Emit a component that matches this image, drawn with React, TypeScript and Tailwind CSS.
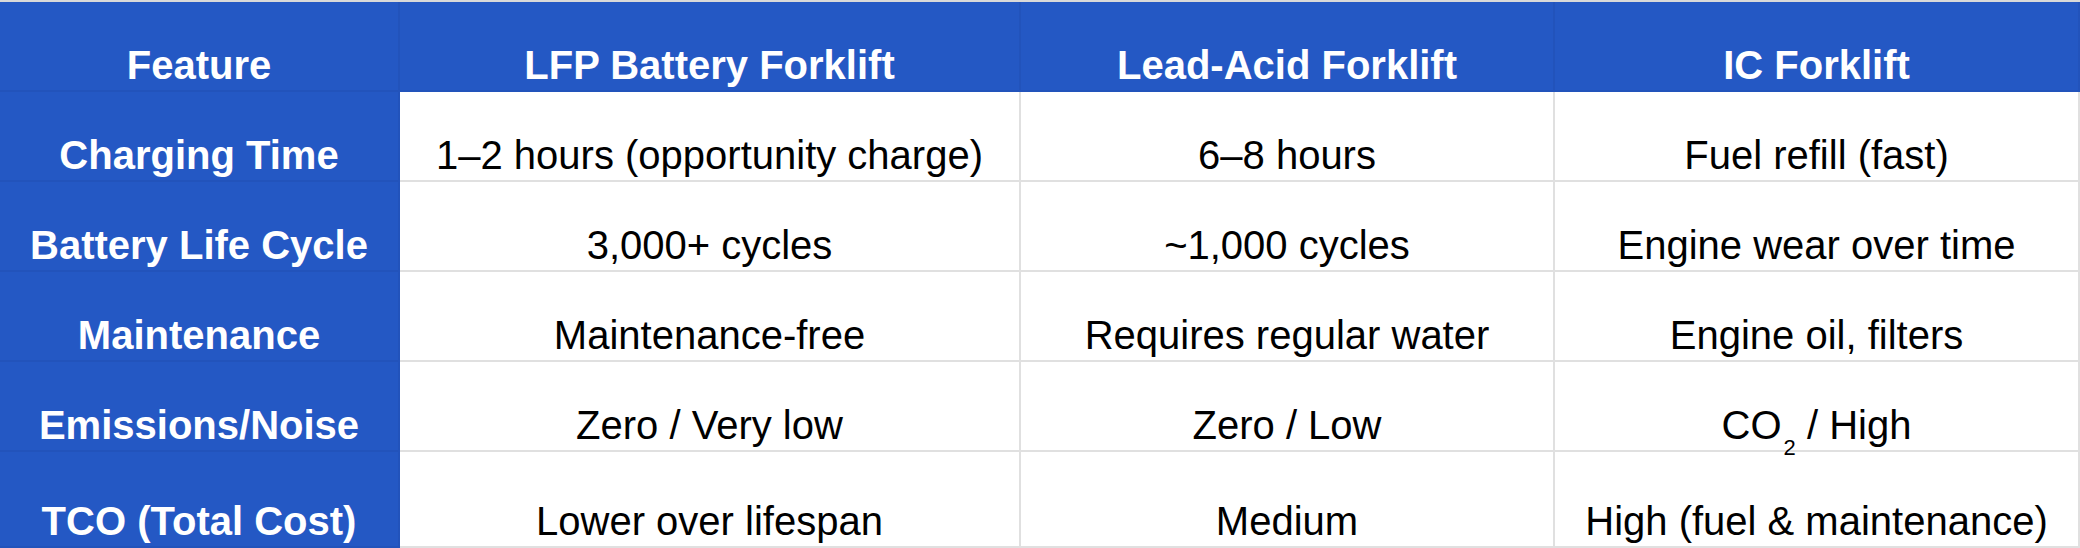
import React from 'react';

type Row = {
  feature: string;
  lfp: React.ReactNode;
  leadAcid: string;
  ic: React.ReactNode;
};

const rows: Row[] = [
  {
    feature: 'Charging Time',
    lfp: '1–2 hours (opportunity charge)',
    leadAcid: '6–8 hours',
    ic: 'Fuel refill (fast)',
  },
  {
    feature: 'Battery Life Cycle',
    lfp: '3,000+ cycles',
    leadAcid: '~1,000 cycles',
    ic: 'Engine wear over time',
  },
  {
    feature: 'Maintenance',
    lfp: 'Maintenance-free',
    leadAcid: 'Requires regular water',
    ic: 'Engine oil, filters',
  },
  {
    feature: 'Emissions/Noise',
    lfp: 'Zero / Very low',
    leadAcid: 'Zero / Low',
    ic: (
      <>
        CO<sub className="text-[22px] bottom-[-16px] ml-[2px]">2</sub> / High
      </>
    ),
  },
  {
    feature: 'TCO (Total Cost)',
    lfp: 'Lower over lifespan',
    leadAcid: 'Medium',
    ic: 'High (fuel & maintenance)',
  },
];

const headers = ['Feature', 'LFP Battery Forklift', 'Lead-Acid Forklift', 'IC Forklift'];

const App: React.FC = () => {
  return (
    <div
      className="w-[2080px] h-[548px] overflow-hidden bg-white border-t-2 border-[#d9d9d9]"
      style={{ fontFamily: '"Liberation Sans", Arial, sans-serif' }}
    >
      <div className="grid grid-cols-[400px_621px_534px_525px] grid-rows-[90px_90px_90px_90px_90px_96px]">
        {/* header row */}
        {headers.map((h) => (
          <div
            key={h}
            className="flex items-end justify-center pb-[2px] bg-[#2458c4] border-r-2 border-b-2 border-[#2253bb] text-white font-bold text-[40px] leading-[46px] whitespace-nowrap"
          >
            {h}
          </div>
        ))}

        {/* body rows */}
        {rows.map((r) => (
          <React.Fragment key={r.feature}>
            <div className="flex items-end justify-center pb-[2px] bg-[#2458c4] border-r-2 border-b-2 border-[#2253bb] text-white font-bold text-[40px] leading-[46px] whitespace-nowrap">
              {r.feature}
            </div>
            <div className="flex items-end justify-center pb-[2px] border-r-2 border-b-2 border-[#e0e0e0] text-black text-[40px] leading-[46px] whitespace-nowrap">
              {r.lfp}
            </div>
            <div className="flex items-end justify-center pb-[2px] border-r-2 border-b-2 border-[#e0e0e0] text-black text-[40px] leading-[46px] whitespace-nowrap">
              {r.leadAcid}
            </div>
            <div className="flex items-end justify-center pb-[2px] border-r-2 border-b-2 border-[#e0e0e0] text-black text-[40px] leading-[46px] whitespace-nowrap">
              <span>{r.ic}</span>
            </div>
          </React.Fragment>
        ))}
      </div>
    </div>
  );
};

export default App;
